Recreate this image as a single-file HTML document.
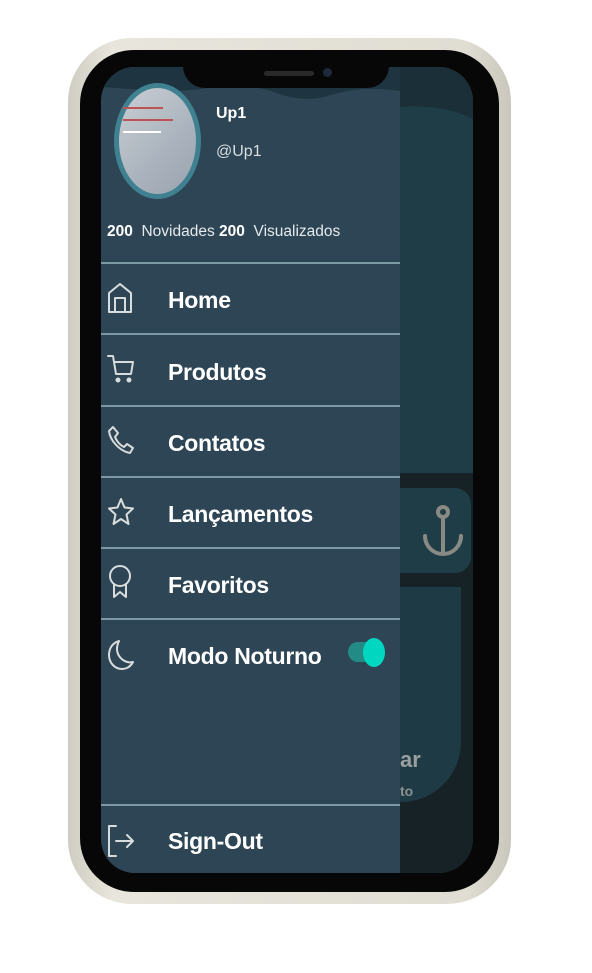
<!DOCTYPE html>
<html><head><meta charset="utf-8"><style>
*{margin:0;padding:0;box-sizing:border-box}
body{width:592px;height:973px;background:#fff;position:relative;overflow:hidden;font-family:"Liberation Sans",sans-serif}
.bezel{position:absolute;left:68px;top:38px;width:443px;height:866px;border-radius:64px;background:linear-gradient(90deg,#cfcdc2,#e8e6dc 10%,#e0ded3 90%,#c9c7bc);}
.black{position:absolute;left:80px;top:50px;width:419px;height:842px;border-radius:54px;background:#070707}
.screen{position:absolute;left:101px;top:67px;width:372px;height:806px;border-radius:34px;overflow:hidden;background:#1f3d47}
.notch{position:absolute;left:183px;top:50px;width:206px;height:38px;background:#070707;border-radius:0 0 22px 22px}
.drawer{position:absolute;left:0;top:0;width:299px;height:806px;background:#2d4554}
.hl{position:absolute;left:0;width:299px;height:2px;background:#7d99a3}
.item{position:absolute;left:67px;color:#fff;font-weight:bold;font-size:23px;letter-spacing:-0.3px}
.ic{position:absolute;left:6px;fill:none;stroke:#d8dcdc;stroke-width:2;stroke-linecap:round;stroke-linejoin:round}
</style></head><body>
<div class="bezel"></div>
<div class="black"></div>
<div class="screen">
  <svg style="position:absolute;left:299px;top:0" width="73" height="60" viewBox="0 0 73 60"><path d="M0 0H73V52C50 40 20 38 0 40Z" fill="#1b2f38"/></svg>
  <div style="position:absolute;left:299px;top:406px;width:73px;height:400px;background:#172227"></div>
  <div style="position:absolute;left:280px;top:421px;width:90px;height:85px;border-radius:16px;background:#1f3d47"></div>
  <svg style="position:absolute;left:320px;top:437px" width="44" height="56" viewBox="0 0 44 56"><g fill="none" stroke="#8a8a85" stroke-width="4" stroke-linecap="round"><circle cx="22" cy="8" r="5"/><path d="M22 13V50M4 32a18 18 0 0 0 36 0"/></g></svg>
  <div style="position:absolute;left:230px;top:520px;width:130px;height:215px;border-radius:0 0 60px 60px;background:#1e3a44"></div>
  <div style="position:absolute;left:299px;top:680px;font-weight:bold;font-size:22px;color:#9a9f9f">ar</div>
  <div style="position:absolute;left:299px;top:716px;font-weight:bold;font-size:14px;color:#8a8f8f">to</div>
  <div class="drawer">
    <svg style="position:absolute;left:0;top:0" width="299" height="45" viewBox="0 0 299 45"><path d="M0 0H299V24C270 20 250 22 230 28C205 36 185 30 170 24C150 18 120 18 100 22C70 26 30 22 0 20Z" fill="#1e3440"/></svg>
    <div style="position:absolute;left:13px;top:16px;width:87px;height:116px;border-radius:50%;background:#3f8190"></div>
    <div style="position:absolute;left:18px;top:21px;width:77px;height:106px;border-radius:50%;background:linear-gradient(135deg,#c9ced3,#aab3bd 60%,#9aa4ae)"></div>
    <div style="position:absolute;left:22px;top:40px;width:40px;height:2px;background:#b55"></div>
    <div style="position:absolute;left:22px;top:52px;width:50px;height:2px;background:#b55"></div>
    <div style="position:absolute;left:22px;top:64px;width:38px;height:2px;background:#fff"></div>
    <div style="position:absolute;left:115px;top:38px;color:#fff;font-weight:bold;font-size:16px">Up1</div>
    <div style="position:absolute;left:115px;top:76px;color:#d8dde0;font-size:16px">@Up1</div>
    <div style="position:absolute;left:6px;top:156px;color:#e6eaec;font-size:15.5px"><b style="color:#fff">200</b>&nbsp; Novidades <b style="color:#fff">200</b>&nbsp; Visualizados</div>
    <div class="hl" style="top:195px"></div>
    <div class="hl" style="top:266px"></div>
    <div class="hl" style="top:338px"></div>
    <div class="hl" style="top:409px"></div>
    <div class="hl" style="top:480px"></div>
    <div class="hl" style="top:551px"></div>
    <div class="hl" style="top:737px"></div>
    <svg class="ic" style="top:215px" width="26" height="32" viewBox="0 0 26 32"><path d="M2 11L13 2L24 11V30H2Z"/><path d="M8 30V16H18V30"/></svg>
    <div class="item" style="top:220px">Home</div>
    <svg class="ic" style="top:287px" width="28" height="30" viewBox="0 0 28 30"><path d="M1 2H6L9 20H24L26 8H8"/><circle cx="11" cy="26" r="1.5" fill="#d8dcdc"/><circle cx="22" cy="26" r="1.5" fill="#d8dcdc"/></svg>
    <div class="item" style="top:292px">Produtos</div>
    <svg class="ic" style="top:358px" width="28" height="30" viewBox="0 0 28 30"><path d="M6 2L11 8L8 12C10 17 13 20 17 22L20 19L26 23L23 28C12 26 3 15 2 6Z"/></svg>
    <div class="item" style="top:363px">Contatos</div>
    <svg class="ic" style="top:430px" width="28" height="30" viewBox="0 0 28 30"><path d="M14 2L17.5 10.5L26 11.5L19.5 17.5L21.5 27L14 22L6.5 27L8.5 17.5L2 11.5L10.5 10.5Z"/></svg>
    <div class="item" style="top:434px">Lançamentos</div>
    <svg class="ic" style="top:497px" width="28" height="36" viewBox="0 0 28 36"><ellipse cx="13" cy="12" rx="10" ry="10"/><path d="M7 20V33L13 28L19 33V20"/></svg>
    <div class="item" style="top:505px">Favoritos</div>
    <svg class="ic" style="top:572px" width="28" height="32" viewBox="0 0 28 32"><path d="M12 2C5 4 2 10 2 16C2 24 8 30 15 30C20 30 24 27 26 23C18 25 10 18 10 10C10 7 11 4 12 2Z"/></svg>
    <div class="item" style="top:576px">Modo Noturno</div>
    <div style="position:absolute;left:247px;top:575px;width:30px;height:20px;border-radius:10px;background:#238b86"></div>
    <div style="position:absolute;left:262px;top:571px;width:22px;height:29px;border-radius:50%;background:#00d6c0"></div>
    <svg class="ic" style="top:757px" width="28" height="34" viewBox="0 0 28 34"><path d="M9 2H2V32H9"/><path d="M9 17H26M20 11L26 17L20 23"/></svg>
    <div class="item" style="top:761px">Sign-Out</div>
  </div>
</div>
<div class="notch"></div>
<div style="position:absolute;left:264px;top:71px;width:50px;height:5px;border-radius:3px;background:#2a2a2a"></div>
<div style="position:absolute;left:323px;top:68px;width:9px;height:9px;border-radius:50%;background:#1c2a3c"></div>
</body></html>
